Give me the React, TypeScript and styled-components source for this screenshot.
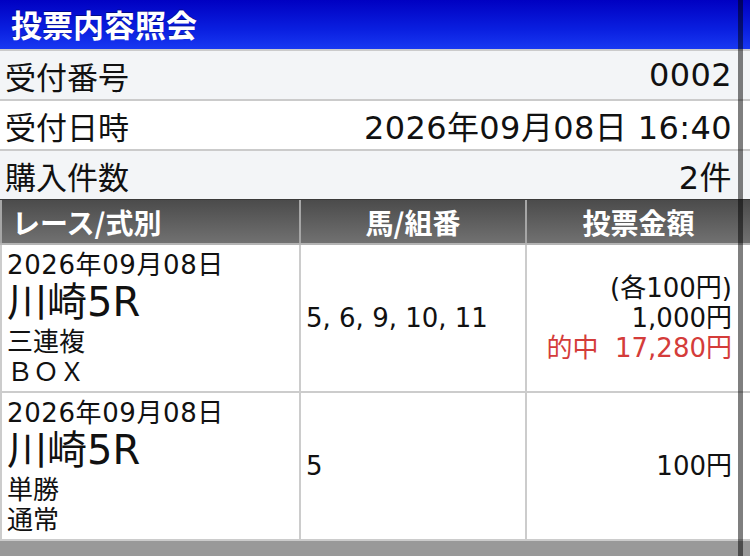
import React from 'react';
import styled, { createGlobalStyle } from 'styled-components';

const GlobalStyle = createGlobalStyle`
  html, body {
    margin: 0;
    padding: 0;
    background: #999999;
    overflow: hidden;
  }
  body {
    font-family: "DejaVu Sans", "Noto Sans CJK JP", sans-serif;
    color: #111111;
  }
`;

const Page = styled.div`
  position: relative;
  width: 750px;
  height: 556px;
  display: flex;
  flex-direction: column;
  background: #999999;
  overflow: hidden;
`;

const TitleBar = styled.div`
  height: 49px;
  display: flex;
  align-items: center;
  padding: 0 0 3px 11px;
  box-sizing: border-box;
  background: linear-gradient(to bottom, #0000c2 0%, #0a1fe0 60%, #1838f2 100%);
  color: #ffffff;
  font-family: "Noto Sans CJK JP", sans-serif;
  font-weight: 700;
  font-size: 31px;
  text-shadow: 0 -1px 0 rgba(0, 0, 0, 0.35);
`;

const InfoRow = styled.div<{ $alt?: boolean }>`
  height: 48px;
  border-top: 2px solid #cbcbcb;
  background: ${(p) => (p.$alt ? '#ffffff' : '#f3f5f7')};
  display: flex;
  align-items: center;
  justify-content: space-between;
  padding: 0 18px 0 5px;
  font-size: 31px;
`;

const Label = styled.span`
  font-family: "Noto Sans CJK JP", sans-serif;
`;

const Value = styled.span`
  font-size: 32px;
  letter-spacing: 0.4px;
`;

const HeaderRow = styled.div`
  display: grid;
  grid-template-columns: 297px 224px 1fr;
  column-gap: 2px;
  padding-left: 2px;
  background: #a6a6a6;
  border-top: 1px solid #3a3a3a;
  border-bottom: 2px solid #b4b4b4;
`;

const HeaderCell = styled.div<{ $left?: boolean }>`
  height: 43px;
  display: flex;
  align-items: center;
  justify-content: ${(p) => (p.$left ? 'flex-start' : 'center')};
  padding-left: ${(p) => (p.$left ? '10px' : '0')};
  background: linear-gradient(to bottom, #4b4b4b, #717171);
  color: #ffffff;
  font-family: "Noto Sans CJK JP", sans-serif;
  font-weight: 700;
  font-size: 28px;
`;

const BodyGrid = styled.div`
  display: grid;
  grid-template-columns: 297px 224px 1fr;
  gap: 2px;
  padding: 0 0 2px 2px;
  background: #cccccc;
`;

const Cell = styled.div<{ $align?: 'left' | 'right' }>`
  background: #ffffff;
  display: flex;
  flex-direction: column;
  justify-content: center;
  align-items: ${(p) => (p.$align === 'right' ? 'flex-end' : 'flex-start')};
  padding: ${(p) => (p.$align === 'right' ? '0 18px 0 0' : '0 0 0 5px')};
  font-size: 26px;
  line-height: 30px;
`;

const RaceCell = styled.div`
  background: #ffffff;
  display: flex;
  flex-direction: column;
  padding: 5px 0 4px 5px;
  font-size: 26px;
  line-height: 30px;
`;

const RaceDate = styled.div`
  letter-spacing: 0.6px;
`;

const RaceName = styled.div`
  font-size: 40px;
  line-height: 44px;
  margin-bottom: 3px;
`;

const Hit = styled.span`
  color: #d43c3a;
`;

const BottomBar = styled.div`
  flex: 1;
  background: #999999;
`;

const ScrollIndicator = styled.div`
  position: absolute;
  top: 0;
  bottom: 0;
  right: 7px;
  width: 5px;
  background: rgba(0, 0, 0, 0.5);
`;

type Bet = {
  date: string;
  race: string;
  kind: string;
  method: string;
  numbers: string;
  amount: string[];
  hit?: string;
};

const bets: Bet[] = [
  {
    date: '2026年09月08日',
    race: '川崎5R',
    kind: '三連複',
    method: 'ＢＯＸ',
    numbers: '5, 6, 9, 10, 11',
    amount: ['(各100円)', '1,000円'],
    hit: '的中\u00a0\u00a017,280円',
  },
  {
    date: '2026年09月08日',
    race: '川崎5R',
    kind: '単勝',
    method: '通常',
    numbers: '5',
    amount: ['100円'],
  },
];

export default function App() {
  return (
    <>
      <GlobalStyle />
      <Page>
        <TitleBar>投票内容照会</TitleBar>
        <InfoRow>
          <Label>受付番号</Label>
          <Value>0002</Value>
        </InfoRow>
        <InfoRow $alt>
          <Label>受付日時</Label>
          <Value>2026年09月08日 16:40</Value>
        </InfoRow>
        <InfoRow>
          <Label>購入件数</Label>
          <Value>2件</Value>
        </InfoRow>

        <HeaderRow>
          <HeaderCell $left>レース/式別</HeaderCell>
          <HeaderCell>馬/組番</HeaderCell>
          <HeaderCell>投票金額</HeaderCell>
        </HeaderRow>

        <BodyGrid>
          {bets.map((bet, i) => (
            <React.Fragment key={i}>
              <RaceCell>
                <RaceDate>{bet.date}</RaceDate>
                <RaceName>{bet.race}</RaceName>
                <div>{bet.kind}</div>
                <div>{bet.method}</div>
              </RaceCell>
              <Cell>{bet.numbers}</Cell>
              <Cell $align="right">
                {bet.amount.map((a) => (
                  <div key={a}>{a}</div>
                ))}
                {bet.hit && <Hit>{bet.hit}</Hit>}
              </Cell>
            </React.Fragment>
          ))}
        </BodyGrid>

        <BottomBar />
        <ScrollIndicator />
      </Page>
    </>
  );
}
